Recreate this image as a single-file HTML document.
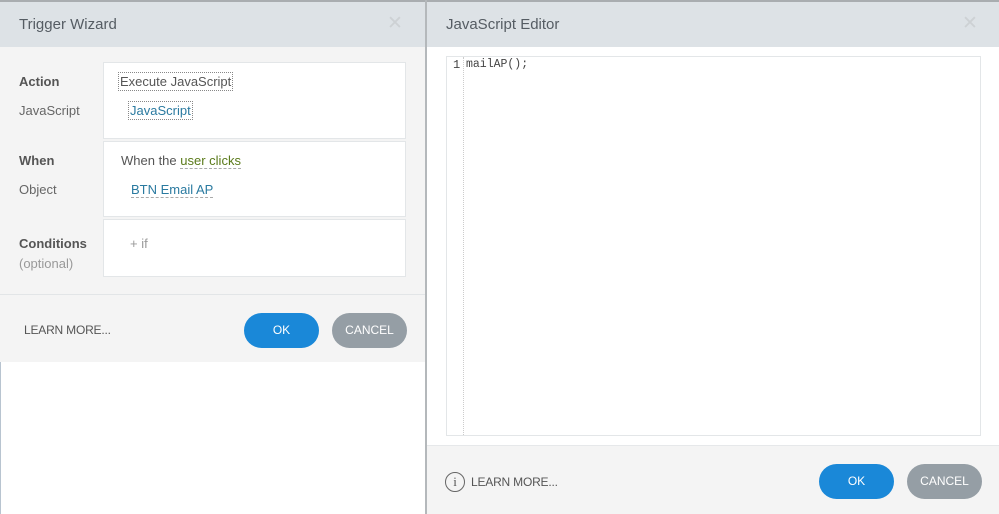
<!DOCTYPE html>
<html><head><style>
*{margin:0;padding:0;box-sizing:border-box}
body{width:999px;height:514px;position:relative;background:#fff;font-family:"Liberation Sans",sans-serif;overflow:hidden}
.a{position:absolute}
.hd{background:#dde2e6;height:45px;font-size:15px;color:#555c63;line-height:46px;padding-left:19px}
.x{position:absolute;top:0;font-size:19px;color:#cdd1d4}
.box{position:absolute;left:103px;width:303px;background:#fff;border:1px solid #e3e6e8}
.lbl{position:absolute;left:19px;font-size:13px;color:#666}
.b{font-weight:bold;color:#555}
.lnk{color:#2a7aa0;border-bottom:1px dashed #aaa}
.btn{position:absolute;width:75px;height:35px;border-radius:18px;color:#fff;font-size:12px;text-align:center;line-height:35px}
.ok{background:#1a88d8}.cn{background:#959ea5}
.lm{font-size:12px;color:#555;letter-spacing:-0.2px}
</style></head><body>
<div class="a" style="left:0;top:0;width:999px;height:2px;background:#a9adb0"></div>
<div class="a" style="left:0;top:362px;width:1px;height:152px;background:#b8c4d0"></div>
<div class="a" style="left:0;top:2px;width:425px;height:360px;background:#f4f4f4">
 <div class="hd">Trigger Wizard<span class="x" style="left:387px;line-height:44px">✕</span></div>
</div>
<div class="a" style="left:425px;top:0;width:2px;height:514px;background:#b4b8bb"></div>
<div class="box" style="top:62px;height:77px"></div>
<div class="box" style="top:141px;height:76px"></div>
<div class="box" style="top:219px;height:58px"></div>
<div class="lbl b" style="top:74px">Action</div>
<div class="lbl" style="top:103px">JavaScript</div>
<div class="lbl b" style="top:153px">When</div>
<div class="lbl" style="top:182px">Object</div>
<div class="lbl b" style="top:236px">Conditions</div>
<div class="lbl" style="top:256px;color:#999">(optional)</div>
<div class="a" style="left:118px;top:72px;font-size:13px;color:#555;border:1px dotted #888;padding:1px 1px">Execute JavaScript</div>
<div class="a" style="left:128px;top:101px;font-size:13px;color:#2a7aa0;border:1px dotted #888;padding:1px 1px">JavaScript</div>
<div class="a" style="left:121px;top:153px;font-size:13px;color:#555">When the <span style="color:#5a7a1a;border-bottom:1px dashed #aaa">user clicks</span></div>
<div class="a" style="left:131px;top:182px;font-size:13px"><span class="lnk">BTN Email AP</span></div>
<div class="a" style="left:130px;top:236px;font-size:13px;color:#999">+ if</div>
<div class="a" style="left:0;top:294px;width:425px;height:1px;background:#e2e5e7"></div>
<div class="a lm" style="left:24px;top:323px">LEARN MORE...</div>
<div class="btn ok" style="left:244px;top:313px">OK</div>
<div class="btn cn" style="left:332px;top:313px">CANCEL</div>
<div class="a" style="left:427px;top:2px;width:572px;height:512px;background:#fff">
 <div class="hd">JavaScript Editor<span class="x" style="left:535px;line-height:44px">✕</span></div>
</div>
<div class="a" style="left:446px;top:56px;width:535px;height:380px;border:1px solid #e3e6e8;background:#fff"></div>
<div class="a" style="left:463px;top:57px;width:1px;height:378px;border-left:1px dotted #ccc"></div>
<div class="a" style="left:453px;top:58px;font-family:'Liberation Mono',monospace;font-size:12px;color:#444">1</div>
<div class="a" style="left:466px;top:58px;font-family:'Liberation Mono',monospace;font-size:11.5px;color:#444">mailAP();</div>
<div class="a" style="left:427px;top:445px;width:572px;height:69px;background:#f4f4f4;border-top:1px solid #e6e8ea"></div>
<div class="a" style="left:445px;top:472px;width:20px;height:20px;border:1.5px solid #666;border-radius:50%;font-family:'Liberation Serif',serif;font-size:13px;color:#555;text-align:center;line-height:18px">i</div>
<div class="a lm" style="left:471px;top:475px">LEARN MORE...</div>
<div class="btn ok" style="left:819px;top:464px">OK</div>
<div class="btn cn" style="left:907px;top:464px">CANCEL</div>
</body></html>
